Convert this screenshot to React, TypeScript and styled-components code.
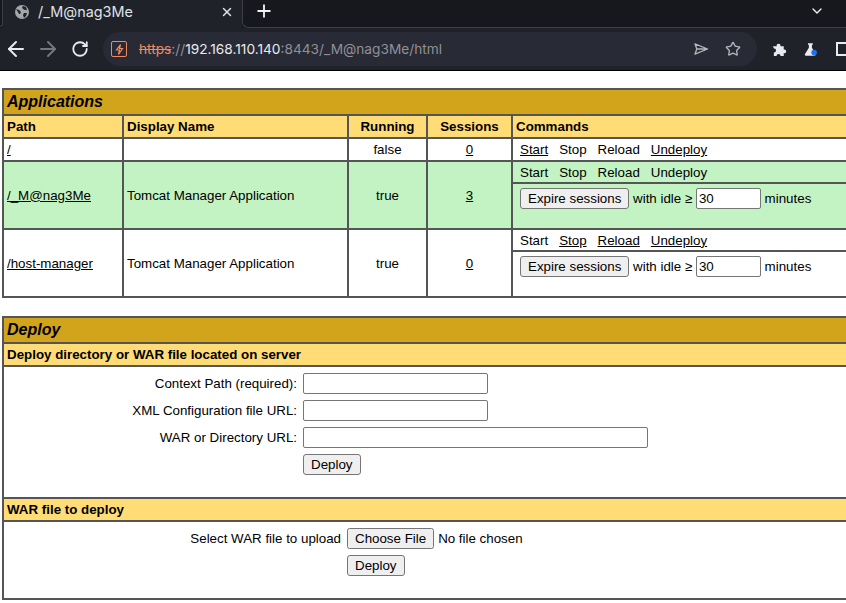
import React from 'react'
import styled, { createGlobalStyle } from 'styled-components'
import { ArrowLeft, ArrowRight, ChevronDown, Plus, RotateCw, Star, X } from 'lucide-react'

const GlobalStyle = createGlobalStyle`
  html, body {
    margin: 0;
    padding: 0;
    background: #fff;
    overflow: hidden;
  }
`

const Page = styled.div`
  width: 846px;
  height: 603px;
  overflow: hidden;
  display: flex;
  flex-direction: column;
  font-family: "Liberation Sans", Arial, sans-serif;
  font-size: 13.3333px;
  color: #000;
`

const TabStrip = styled.div`
  height: 28px;
  flex: none;
  display: flex;
  background: #17181d;
`

const TabGap = styled.div`
  width: 2px;
  border-right: 1px solid #3d3f46;
  border-bottom: 1px solid #3d3f46;
  border-bottom-right-radius: 3px;
  margin-bottom: 1px;
`

const ActiveTab = styled.div`
  width: 239px;
  flex: none;
  display: flex;
  align-items: center;
  padding: 0 8px 5px 12px;
  box-sizing: border-box;
  background: #20222a;
  color: #dfe1e5;
  font-family: Inter, "Noto Sans", sans-serif;
  font-size: 14.4px;
`

const TabTitle = styled.span`
  margin-left: 9px;
  flex: 1;
`

const NewTabArea = styled.div`
  flex: 1;
  display: flex;
  align-items: center;
  justify-content: space-between;
  padding: 0 21px 5px 11px;
  border-left: 1px solid #3d3f46;
  border-bottom: 1px solid #3d3f46;
  border-bottom-left-radius: 6px;
  color: #f1f3f4;
`

const Toolbar = styled.div`
  height: 42px;
  flex: none;
  display: flex;
  align-items: center;
  background: #20222a;
  border-bottom: 1px solid #000;
  padding-left: 4px;
  color: #e8eaed;
`

const NavIcons = styled.div`
  display: flex;
  align-items: center;
  gap: 8px;
  width: 99px;
  flex: none;
`

const ReloadIcon = styled(RotateCw)`
  margin-left: 3px;
`

const Omnibox = styled.div`
  width: 654px;
  height: 34px;
  flex: none;
  display: flex;
  align-items: center;
  background: #282a35;
  border-radius: 17px;
  padding: 0 16px 0 8px;
  box-sizing: border-box;
  font-family: Inter, "Noto Sans", sans-serif;
  font-size: 13.7px;
  color: #8f9197;
`

const SecurityBadge = styled.span`
  width: 16px;
  height: 16px;
  box-sizing: border-box;
  flex: none;
  display: flex;
  align-items: center;
  justify-content: center;
  border: 1.5px solid #f08a5d;
  border-radius: 2px;
  margin-right: 12px;
`

const Scheme = styled.span`
  color: #f08a5d;
  text-decoration: line-through;
`

const Host = styled.span`
  color: #e8eaed;
`

const UrlText = styled.span`
  flex: 1;
`

const OmniIcons = styled.div`
  display: flex;
  align-items: center;
  gap: 16px;
  color: #b4b6bb;
`

const ExtIcons = styled.div`
  display: flex;
  align-items: center;
  gap: 17px;
  margin-left: 15px;
  flex: none;
`

const Content = styled.main`
  flex: 1;
  padding: 17px 0 0 2px;
  display: flex;
  flex-direction: column;
  gap: 18px;
`

const Table = styled.table`
  width: 880px;
  flex: none;
  table-layout: fixed;
  border-collapse: collapse;
  border: 2px solid #555;
`

const Row = styled.tr<{ $height: number }>`
  height: ${p => p.$height}px;
`

const Cell = styled.td<{ $bg?: string; $align?: string }>`
  border: 2px solid #555;
  padding: 0 3px;
  background: ${p => p.$bg ?? '#fff'};
  text-align: ${p => p.$align ?? 'left'};
  vertical-align: middle;
`

const TitleCell = styled.td`
  border: 2px solid #555;
  background: #d2a41c;
  height: 24px;
  padding: 0 3px;
  font-size: 16px;
  font-weight: bold;
  font-style: italic;
`

const HeaderCell = styled.td<{ $align?: string }>`
  border: 2px solid #555;
  background: #ffdc75;
  height: 21px;
  padding: 0 3px;
  font-weight: bold;
  text-align: ${p => p.$align ?? 'left'};
`

const Link = styled.a`
  color: #000;
  text-decoration: underline;
`

const CommandRow = styled.div`
  display: flex;
  gap: 11px;
  padding-left: 4px;
`

const ExpireForm = styled.form`
  margin: 0;
  padding: 0 0 16px 4px;
`

const Button = styled.button`
  height: 21px;
  padding: 0 7px;
  border: 1px solid #767676;
  border-radius: 3px;
  background: #efefef;
  color: #000;
  font: 13.3333px "Liberation Sans", Arial, sans-serif;
`

const TextInput = styled.input<{ $width: number }>`
  width: ${p => p.$width}px;
  height: 21px;
  box-sizing: border-box;
  padding: 1px 2px;
  border: 1px solid #767676;
  border-radius: 2px;
  background: #fff;
  font: 13.3333px "Liberation Sans", Arial, sans-serif;
`

const FormGrid = styled.form<{ $label: number; $pad: string }>`
  display: grid;
  grid-template-columns: ${p => p.$label}px 1fr;
  column-gap: 6px;
  row-gap: 6px;
  align-items: center;
  justify-items: start;
  margin: 0;
  padding: ${p => p.$pad};
`

const FieldLabel = styled.label`
  justify-self: end;
`

const FileInput = styled.input`
  font: 13.3333px "Liberation Sans", Arial, sans-serif;
  width: 300px;
`

const RowField = ({ label, width }: { label: string; width: number }) => (
  <>
    <FieldLabel>{label}</FieldLabel>
    <TextInput $width={width} type="text" />
  </>
)

const ExpireSessions = () => (
  <ExpireForm>
    <Button type="button">Expire sessions</Button> with idle ≥ <TextInput $width={65} type="text" defaultValue="30" /> minutes
  </ExpireForm>
)

const GlobeIcon = () => (
  <svg width="14" height="14" viewBox="0 0 14 14">
    <circle cx="7" cy="7" r="7" fill="#a5a7ab" />
    <path d="M1 4l3 1 2 2-1 2-1 0-1-2zM8 1l3 1 1 3-2 0-2-1-1-2zM9 8l3 0-1 3-2 2-1-3z" fill="#20222a" />
  </svg>
)

const BoltIcon = () => (
  <svg width="9" height="11" viewBox="0 0 9 11">
    <path d="M5.5 0.5L1.5 6H4.5L3.5 10.5L7.5 4.5H4.5Z" fill="none" stroke="#f08a5d" strokeWidth="1.2" />
  </svg>
)

const SendIcon = () => (
  <svg width="15" height="14" viewBox="0 0 16 14">
    <path d="M1 1.5L14.5 7L1 12.5L3 7ZM3 7H14" fill="none" stroke="currentColor" strokeWidth="1.4" strokeLinejoin="round" />
  </svg>
)

const PuzzleIcon = () => (
  <svg width="15" height="15" viewBox="0 0 16 16">
    <path d="M1 4.5H5C4.2 1 9.8 1 9 4.5H12.5V8C16 7.2 16 12.8 12.5 12V15H9C9.8 12 4.2 12 5 15H2V11C5 11.8 5 6.2 2 7Z" fill="#e8eaed" />
  </svg>
)

const FlaskIcon = () => (
  <svg width="15" height="15" viewBox="0 0 17 16">
    <path d="M4.5 1H10V2.5H9V6L13 13.5C13.4 14.4 12.8 15 12 15H2C1.2 15 0.6 14.4 1 13.5L5.5 6V2.5H4.5Z" fill="#e8eaed" />
    <circle cx="11.5" cy="11.5" r="3.2" fill="#1a73e8" />
  </svg>
)

const PanelIcon = styled.span`
  width: 10px;
  height: 10px;
  border: 2px solid #e8eaed;
  flex: none;
`

export default function App() {
  return (
    <Page>
      <GlobalStyle />
      <TabStrip>
        <TabGap />
        <ActiveTab>
          <GlobeIcon />
          <TabTitle>/_M@nag3Me</TabTitle>
          <X size={14} strokeWidth={2.5} />
        </ActiveTab>
        <NewTabArea>
          <Plus size={20} strokeWidth={2.2} />
          <ChevronDown size={16} strokeWidth={2} />
        </NewTabArea>
      </TabStrip>
      <Toolbar>
        <NavIcons>
          <ArrowLeft size={24} strokeWidth={2} />
          <ArrowRight size={24} strokeWidth={2} color="#75777c" />
          <ReloadIcon size={18} strokeWidth={2.4} />
        </NavIcons>
        <Omnibox>
          <SecurityBadge>
            <BoltIcon />
          </SecurityBadge>
          <UrlText>
            <Scheme>https</Scheme>://<Host>192.168.110.140</Host>:8443/_M@nag3Me/html
          </UrlText>
          <OmniIcons>
            <SendIcon />
            <Star size={16} strokeWidth={2} />
          </OmniIcons>
        </Omnibox>
        <ExtIcons>
          <PuzzleIcon />
          <FlaskIcon />
          <PanelIcon />
        </ExtIcons>
      </Toolbar>
      <Content>
        <Table>
          <colgroup>
            <col width="120" />
            <col width="225" />
            <col width="79" />
            <col width="85" />
            <col />
          </colgroup>
          <tbody>
            <tr>
              <TitleCell colSpan={5}>Applications</TitleCell>
            </tr>
            <tr>
              <HeaderCell>Path</HeaderCell>
              <HeaderCell>Display Name</HeaderCell>
              <HeaderCell $align="center">Running</HeaderCell>
              <HeaderCell $align="center">Sessions</HeaderCell>
              <HeaderCell>Commands</HeaderCell>
            </tr>
            <Row $height={23}>
              <Cell><Link>/</Link></Cell>
              <Cell />
              <Cell $align="center">false</Cell>
              <Cell $align="center"><Link>0</Link></Cell>
              <Cell>
                <CommandRow>
                  <Link>Start</Link><span>Stop</span><span>Reload</span><Link>Undeploy</Link>
                </CommandRow>
              </Cell>
            </Row>
            <Row $height={22}>
              <Cell $bg="#c3f3c3" rowSpan={2}><Link>/_M@nag3Me</Link></Cell>
              <Cell $bg="#c3f3c3" rowSpan={2}>Tomcat Manager Application</Cell>
              <Cell $bg="#c3f3c3" $align="center" rowSpan={2}>true</Cell>
              <Cell $bg="#c3f3c3" $align="center" rowSpan={2}><Link>3</Link></Cell>
              <Cell $bg="#c3f3c3">
                <CommandRow>
                  <span>Start</span><span>Stop</span><span>Reload</span><span>Undeploy</span>
                </CommandRow>
              </Cell>
            </Row>
            <Row $height={46}>
              <Cell $bg="#c3f3c3"><ExpireSessions /></Cell>
            </Row>
            <Row $height={22}>
              <Cell rowSpan={2}><Link>/host-manager</Link></Cell>
              <Cell rowSpan={2}>Tomcat Manager Application</Cell>
              <Cell $align="center" rowSpan={2}>true</Cell>
              <Cell $align="center" rowSpan={2}><Link>0</Link></Cell>
              <Cell>
                <CommandRow>
                  <span>Start</span><Link>Stop</Link><Link>Reload</Link><Link>Undeploy</Link>
                </CommandRow>
              </Cell>
            </Row>
            <Row $height={46}>
              <Cell><ExpireSessions /></Cell>
            </Row>
          </tbody>
        </Table>
        <Table>
          <tbody>
            <tr>
              <TitleCell>Deploy</TitleCell>
            </tr>
            <tr>
              <HeaderCell>Deploy directory or WAR file located on server</HeaderCell>
            </tr>
            <tr>
              <Cell>
                <FormGrid $label={290} $pad="6px 0 22px 0">
                  <RowField label="Context Path (required):" width={185} />
                  <RowField label="XML Configuration file URL:" width={185} />
                  <RowField label="WAR or Directory URL:" width={345} />
                  <span />
                  <Button type="button">Deploy</Button>
                </FormGrid>
              </Cell>
            </tr>
            <tr>
              <HeaderCell>WAR file to deploy</HeaderCell>
            </tr>
            <tr>
              <Cell>
                <FormGrid $label={334} $pad="6px 0 22px 0">
                  <FieldLabel>Select WAR file to upload</FieldLabel>
                  <FileInput type="file" />
                  <span />
                  <Button type="button">Deploy</Button>
                </FormGrid>
              </Cell>
            </tr>
          </tbody>
        </Table>
      </Content>
    </Page>
  )
}
